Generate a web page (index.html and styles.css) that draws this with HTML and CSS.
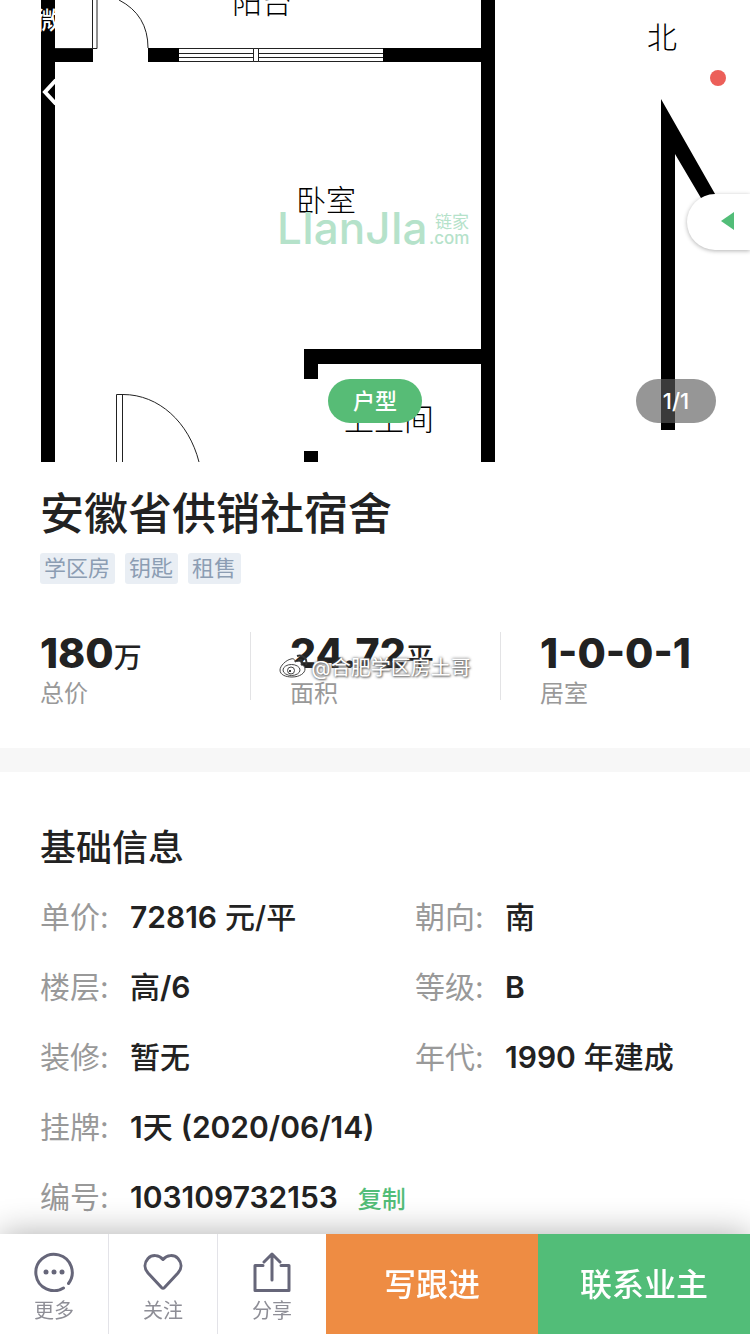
FILE: index.html
```html
<!DOCTYPE html>
<html lang="zh-CN">
<head>
    <meta charset="UTF-8">
    <meta name="viewport" content="width=device-width, initial-scale=1.0">
    <title>安徽省供销社宿舍</title>
    <link rel="stylesheet" href="styles.css">
</head>
<body>

<!-- Floor plan -->
<header class="gallery">
    <svg class="plan" viewBox="0 0 750 462">
        <!-- Walls -->
        <path d="M41 0h14v48h38v14H55v400H41zM148 48h31v14h-31zM383 48h98V0h14v462h-14V364H318v15h-14v-30h177V62h-98zM304 451h14v11h-14z"/>
        <!-- Window -->
        <g class="thin">
            <path d="M179 48.5h204M179 53.5h204M179 57.5h204M179 61.5h204"/>
            <path class="pane" d="M253.500 48.500h5v13h-5z"/>
        </g>
        <!-- Doors -->
        <path class="thin" d="M55 48.500h42V0M92.500 0v48M119 0q29 15 29 48"/>
        <path class="thin" d="M116.500 462v-67.500h6.500c36 0 66 28 76 67.500M122.500 395v67"/>
        <!-- North arrow -->
        <path d="M661 99l66 116h-16l-36-61v276h-14z"/>
        <text class="room" x="232" y="13">阳台</text>
        <text class="room" x="296" y="211">卧室</text>
        <text class="room" x="344" y="430">卫生间</text>
        <text class="room" x="647" y="48">北</text>
        <g class="brand">
            <text class="brand-name" x="277" y="244">LIanJIa</text>
            <text class="brand-cn" x="435" y="228">链家</text>
            <text class="brand-com" x="429" y="244">.com</text>
        </g>
    </svg>
    <span class="status">微信</span>
    <button class="back" aria-label="返回">
        <svg width="16" height="28" viewBox="0 0 16 28"><path d="M14 2L3 14l11 12"/></svg>
    </button>
    <span class="dot"></span>
    <button class="side-tab" aria-label="展开">
        <svg width="14" height="18" viewBox="0 0 14 18"><path d="M0 9L13 0v18z"/></svg>
    </button>
    <button class="pill type">户型</button>
    <span class="pill count">1/1</span>
</header>

<section class="summary">
    <h1>安徽省供销社宿舍</h1>
    <div class="tags">
        <span class="tag">学区房</span>
        <span class="tag">钥匙</span>
        <span class="tag">租售</span>
    </div>
    <div class="stats">
        <div class="stat">
            <div class="number">180<small>万</small></div>
            <div class="caption">总价</div>
        </div>
        <div class="stat">
            <div class="number">24.72<small>平</small></div>
            <div class="caption">面积</div>
        </div>
        <div class="stat">
            <div class="number">1-0-0-1</div>
            <div class="caption">居室</div>
        </div>
        <div class="watermark">
            <svg width="30" height="24" viewBox="0 0 30 24">
                <path class="face" d="M12 5C7 6 1 12 1 16c0 5 6 7 12 7 8 0 13-4 13-8 0-3-2-4-4-4 1-3-1-5-6-3 0-2-1-4-4-3z"/>
                <ellipse class="face" cx="12.500" cy="16" rx="8.500" ry="5.500"/>
                <circle class="face" cx="12" cy="16.500" r="3.500"/>
                <circle cx="11" cy="17" r="1"/>
                <path class="wave" d="M18 2c6-2 11 3 9 9M19 6c3-1 5 1 4 4"/>
            </svg>
            <span>@合肥学区房土哥</span>
        </div>
    </div>
</section>

<!-- Basic info -->
<section class="info">
    <h2>基础信息</h2>
    <dl class="fields">
        <div class="field"><dt>单价:</dt><dd><b>72816</b> 元/平</dd></div>
        <div class="field"><dt>朝向:</dt><dd>南</dd></div>
        <div class="field"><dt>楼层:</dt><dd>高<b>/6</b></dd></div>
        <div class="field"><dt>等级:</dt><dd><b>B</b></dd></div>
        <div class="field"><dt>装修:</dt><dd>暂无</dd></div>
        <div class="field"><dt>年代:</dt><dd><b>1990</b> 年建成</dd></div>
        <div class="field wide"><dt>挂牌:</dt><dd><b>1</b>天 <b>(2020/06/14)</b></dd></div>
        <div class="field wide"><dt>编号:</dt><dd><b>103109732153</b></dd><button class="copy">复制</button></div>
    </dl>
</section>

<!-- Bottom bar -->
<footer class="bar">
    <button class="tool">
        <svg width="40" height="40" viewBox="0 0 40 40">
            <path d="M29.500 36A18.200 18.200 0 1 1 34.500 31.500"/>
            <g class="dots"><circle cx="12" cy="20" r="2.500"/><circle cx="20" cy="20" r="2.500"/><circle cx="28" cy="20" r="2.500"/></g>
        </svg>
        更多
    </button>
    <button class="tool">
        <svg width="40" height="40" viewBox="0 0 40 40">
            <path d="M20 7.500C16 2.500 9 2.500 5 6.500c-4 4.500-4 10 0 14.500l13.500 14.500q1.500 1.500 3 0L35 21c4-4.500 4-10 0-14.500-4-4-11-4-15 1z"/>
        </svg>
        关注
    </button>
    <button class="tool">
        <svg width="40" height="40" viewBox="0 0 40 40">
            <path d="M11 13.500H3V38.500h34v-25h-8M20 28V2.500M12 10l8-8 8 8"/>
        </svg>
        分享
    </button>
    <button class="action follow">写跟进</button>
    <button class="action contact">联系业主</button>
</footer>

</body>
</html>
```
FILE: styles.css
```css
* {
    box-sizing: border-box;
}

body {
    margin: 0;
    padding-bottom: 100px; /* room for the bottom bar */
    background-color: #fff;
    color: #222;
    font-family: Inter, "Noto Sans CJK SC", sans-serif;
}

button {
    border: none;
    padding: 0;
    background: none;
    font-family: inherit;
    cursor: pointer;
}

/* Floor plan */
.gallery {
    position: relative;
    overflow: hidden;
}

.plan {
    display: block;
    width: 100%;
    height: auto;
}

.thin {
    fill: none;
    stroke: #222;
    stroke-width: 1;
}

.pane {
    fill: #fff;
}

.room {
    font-family: "Noto Sans CJK SC", sans-serif;
    font-size: 30px;
    font-weight: 300;
    fill: #000;
}

.brand {
    fill: #b5e2ca;
}

.brand-name {
    font-size: 44px;
    font-weight: 500;
}

.brand-cn {
    font-size: 17px;
}

.brand-com {
    font-size: 17px;
    font-weight: 500;
}

.status {
    position: absolute;
    top: 6px;
    left: 36px;
    font-size: 24px;
    line-height: 30px;
    font-weight: 500;
    color: #fff;
}

.back {
    position: absolute;
    top: 78px;
    left: 42px;
    height: 28px;
}

.back svg {
    display: block;
    fill: none;
    stroke: #fff;
    stroke-width: 4;
}

.dot {
    position: absolute;
    top: 70px;
    right: 24px;
    width: 16px;
    height: 16px;
    border-radius: 50%;
    background-color: #ec5f59;
}

.side-tab {
    position: absolute;
    top: 194px;
    right: 0;
    width: 63px;
    height: 56px;
    padding-left: 18px;
    border-radius: 28px 0 0 28px;
    background-color: #fff;
    box-shadow: 0 1px 4px rgba(0, 0, 0, 0.3);
}

.side-tab svg {
    fill: #52bd78;
}

.pill {
    position: absolute;
    bottom: 39px;
    height: 44px;
    border-radius: 22px;
    font-size: 22px;
    line-height: 44px;
    text-align: center;
    color: #fff;
}

.type {
    left: 50%;
    width: 94px;
    margin-left: -47px;
    font-weight: 500;
    background-color: #57bc76;
}

.count {
    right: 34px;
    width: 80px;
    font-weight: 500;
    background-color: rgba(90, 90, 90, 0.64);
}

/* Title, tags and the three numbers */
.summary {
    padding-top: 20px;
    border-bottom: 24px solid #f7f7f7;
}

h1 {
    margin: 0 40px;
    font-size: 44px;
    line-height: 64px;
    font-weight: 500;
}

.tags {
    display: flex;
    gap: 10px;
    margin: 7px 40px 0;
}

.tag {
    padding: 0 5px 0 4px;
    border-radius: 3px;
    font-size: 22px;
    line-height: 31px;
    color: #8c9db3;
    background-color: #e9eef4;
}

.stats {
    position: relative;
    display: grid;
    grid-template-columns: repeat(3, 1fr);
    margin-top: 48px;
    padding-bottom: 48px;
}

.stat {
    padding-left: 40px;
    height: 68px;
}

.stat + .stat {
    padding-left: 39px;
    border-left: 1px solid #e3e3e5;
}

.number {
    height: 44px;
    font-size: 41px;
    line-height: 42px;
    font-weight: 800;
}

.number small {
    font-size: 28px;
    line-height: 1;
    font-weight: 500;
}

.caption {
    font-size: 24px;
    line-height: 36px;
    color: #999;
}

.watermark {
    position: absolute;
    top: 22px;
    left: 0;
    right: 0;
    display: flex;
    justify-content: center;
    gap: 2px;
    font-size: 20px;
    line-height: 28px;
    color: #fff;
    text-shadow: 0 0 3px #555, 1px 1px 2px #777;
}

.face {
    fill: #fff;
    stroke: #444;
    stroke-width: 1;
}

.wave {
    fill: none;
    stroke: #333;
    stroke-width: 2;
}

/* Basic info */
.info {
    padding: 50px 0 0 40px;
}

h2 {
    margin: 0;
    font-size: 36px;
    line-height: 52px;
    font-weight: 500;
}

.fields {
    display: grid;
    grid-template-columns: 1fr 1fr;
    margin: 8px 0 0;
    font-size: 30px;
    line-height: 70px;
}

.field {
    display: flex;
    align-items: baseline;
    height: 70px;
}

.field:nth-child(even) {
    padding-left: 20px;
}

.field.wide {
    grid-column: 1 / -1;
    padding-left: 0;
}

dt {
    width: 90px;
    color: #999;
}

dd {
    margin: 0;
    font-weight: 500;
}

dd b {
    font-weight: 600;
}

.copy {
    margin-left: 20px;
    font-size: 24px;
    font-weight: 500;
    color: #52bd78;
}

/* Bottom bar */
.bar {
    position: fixed;
    left: 0;
    right: 0;
    bottom: 0;
    display: flex;
    height: 100px;
    background-color: #fff;
    box-shadow: 0 0 32px rgba(0, 0, 0, 0.32);
}

.tool {
    display: flex;
    flex-direction: column;
    align-items: center;
    width: 109px;
    padding-top: 18px;
    border-right: 1px solid #e3e3e8;
    font-size: 20px;
    line-height: 38px;
    color: #8e8e96;
}

.tool:nth-child(3) {
    width: 108px;
    border-right: none;
}

.tool svg {
    fill: none;
    stroke: #666679;
    stroke-width: 3;
    stroke-linecap: round;
    stroke-linejoin: round;
}

.tool .dots {
    fill: #666679;
    stroke: none;
}

.action {
    flex: 1;
    padding-bottom: 4px;
    font-size: 32px;
    font-weight: 500;
    color: #fff;
}

.follow {
    background-color: #ee8c43;
}

.contact {
    background-color: #52bd78;
}
```
